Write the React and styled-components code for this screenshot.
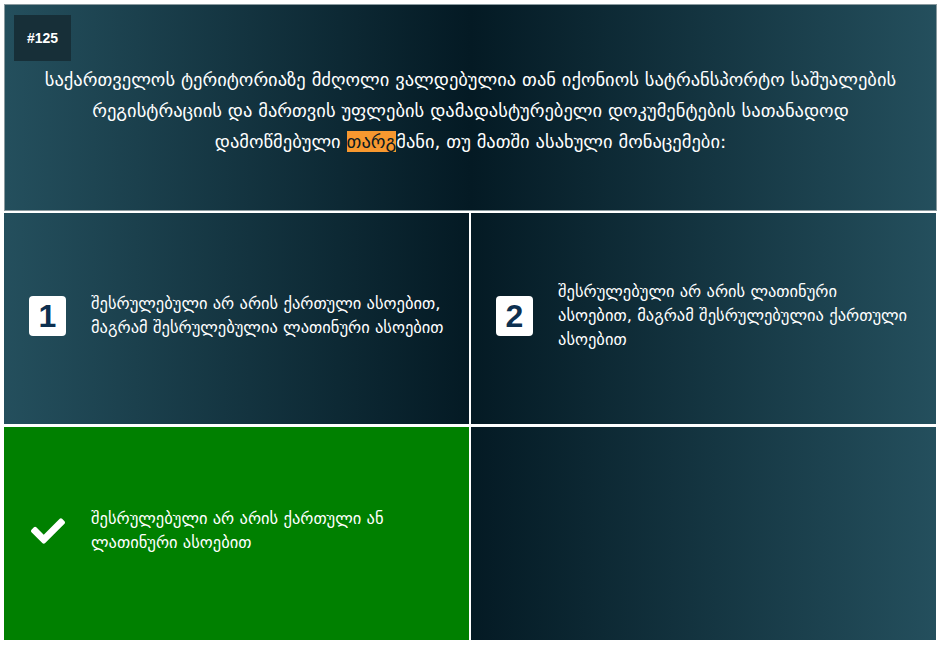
import React from 'react';
import styled, { createGlobalStyle } from 'styled-components';
import { FaCheck } from 'react-icons/fa';

const GlobalStyle = createGlobalStyle`
  body {
    margin: 0;
    background: #fff;
    font-family: "DejaVu Sans", "Liberation Sans", sans-serif;
  }
`

const Page = styled.div`
  padding: 4px 8px 0 4px;
  display: flex;
  flex-direction: column;
  gap: 2px;
`

const Question = styled.div`
  height: 207px;
  border: 1px solid #8a9a9f;
  background: linear-gradient(to right, #244f5d, #041a24 50%, #244f5d);
  color: #fff;
  padding: 10px 9px;
  box-sizing: border-box;
`

const Badge = styled.div`
  display: inline-block;
  background: #172f38;
  font-family: "Liberation Sans", Arial, sans-serif;
  font-weight: bold;
  font-size: 14px;
  padding: 15px 13px;
`

const QText = styled.p`
  margin: 3px 20px 0;
  text-align: center;
  font-size: 18.5px;
  line-height: 31px;
`

const Mark = styled.span`
  background: #f7982f;
  color: #0a1a22;
`

const Grid = styled.div`
  display: grid;
  grid-template-columns: 465px 465px;
  grid-template-rows: 211px 213px;
  column-gap: 2px;
  row-gap: 3px;
`

const Answer = styled.div`
  display: flex;
  align-items: center;
  gap: 25px;
  padding: 0 25px 5px 25px;
  color: #fff;
  background: ${({ $correct, $side }) =>
    $correct
      ? '#008000'
      : $side === 'left'
      ? 'linear-gradient(to right, #244f5d, #041a24)'
      : 'linear-gradient(to right, #041a24, #244f5d)'};
`

const Num = styled.div`
  flex: none;
  width: 37px;
  height: 40px;
  border-radius: 4px;
  background: #fff;
  color: #0d3050;
  font-family: "Liberation Sans", Arial, sans-serif;
  font-weight: bold;
  font-size: 32px;
  display: flex;
  align-items: center;
  justify-content: center;
`

const Check = styled.div`
  flex: none;
  width: 37px;
  display: flex;
  justify-content: center;
  font-size: 34px;
  color: #fff;
`

const AText = styled.div`
  font-size: 16.5px;
  line-height: 24px;
`

const answers = [
  { n: '1', side: 'left', text: 'შესრულებული არ არის ქართული ასოებით, მაგრამ შესრულებულია ლათინური ასოებით' },
  { n: '2', side: 'right', text: 'შესრულებული არ არის ლათინური ასოებით, მაგრამ შესრულებულია ქართული ასოებით' },
  { n: '3', side: 'left', correct: true, text: 'შესრულებული არ არის ქართული ან ლათინური ასოებით' },
]

export default function App() {
  return (
    <>
      <GlobalStyle />
      <Page>
        <Question>
          <Badge>#125</Badge>
          <QText>
            საქართველოს ტერიტორიაზე მძღოლი ვალდებულია თან იქონიოს სატრანსპორტო საშუალების
            რეგისტრაციის და მართვის უფლების დამადასტურებელი დოკუმენტების სათანადოდ
            დამოწმებული <Mark>თარგ</Mark>მანი, თუ მათში ასახული მონაცემები:
          </QText>
        </Question>
        <Grid>
          {answers.map((a) => (
            <Answer key={a.n} $side={a.side} $correct={a.correct}>
              {a.correct ? (
                <Check><FaCheck /></Check>
              ) : (
                <Num>{a.n}</Num>
              )}
              <AText>{a.text}</AText>
            </Answer>
          ))}
          <Answer $side="right" />
        </Grid>
      </Page>
    </>
  )
}
